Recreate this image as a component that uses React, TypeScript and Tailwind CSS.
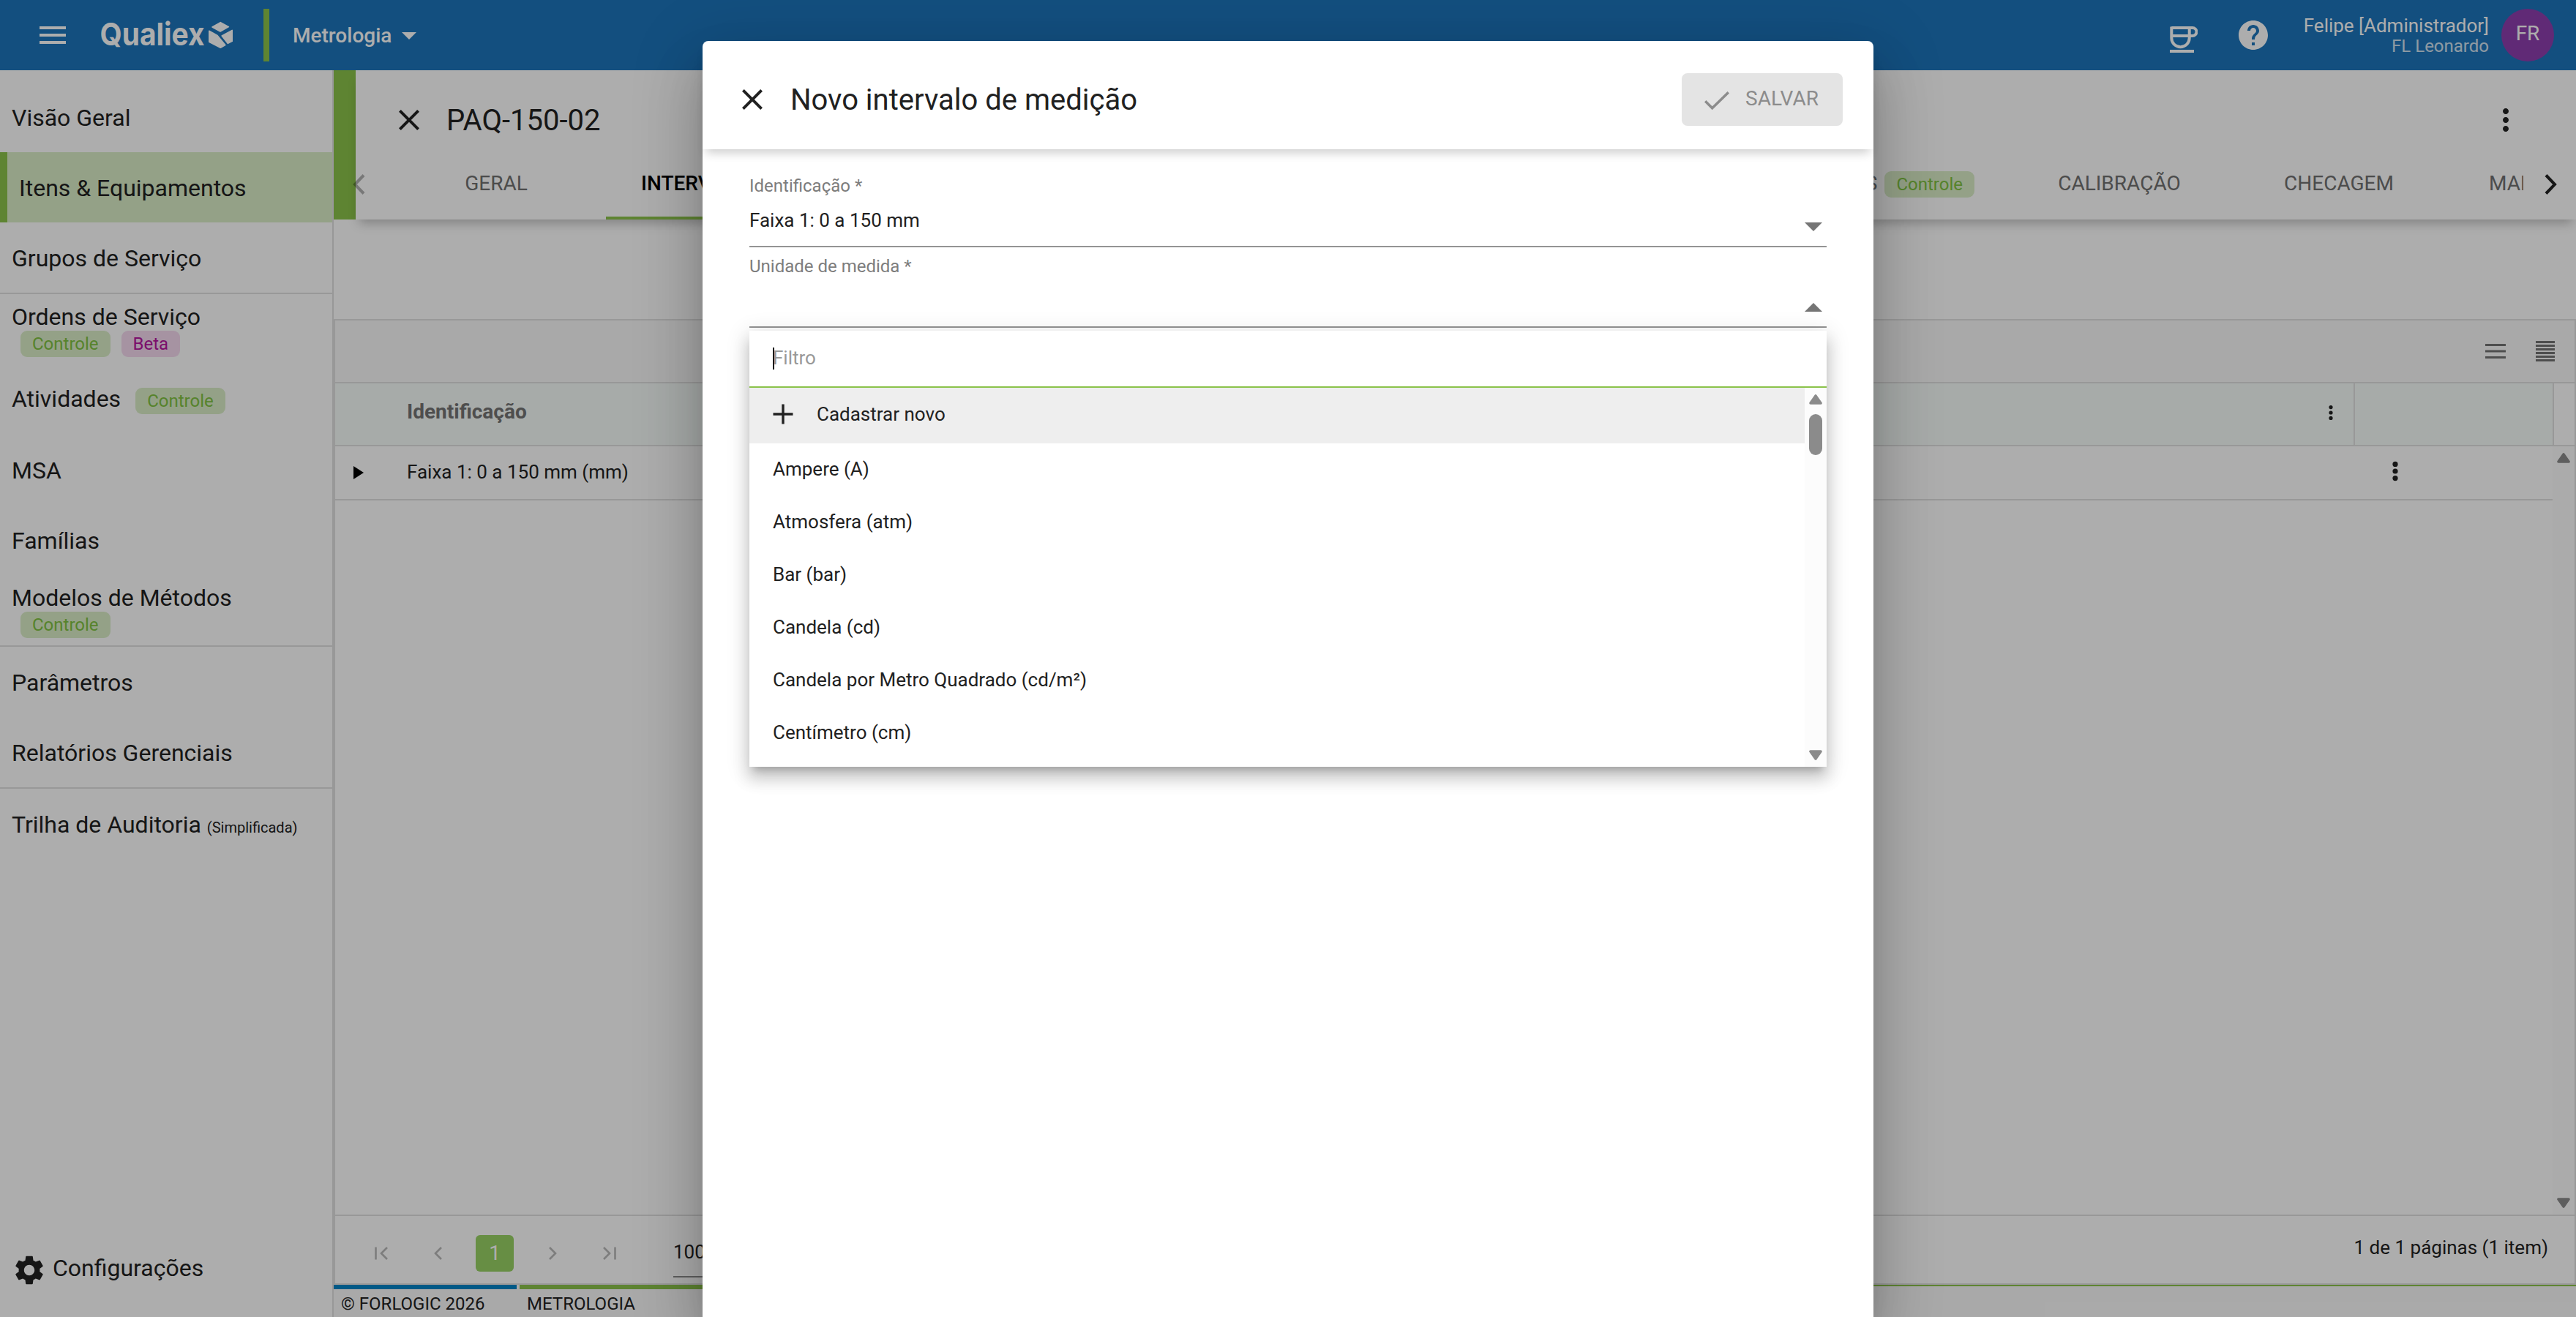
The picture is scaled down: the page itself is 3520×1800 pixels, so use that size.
import type { ReactNode } from "react";
import { MdArrowDropDown, MdClose, MdHelp, MdMenu, MdMoreVert, MdSettings } from "react-icons/md";

const units = [
  "Ampere (A)",
  "Atmosfera (atm)",
  "Bar (bar)",
  "Candela (cd)",
  "Candela por Metro Quadrado (cd/m²)",
  "Centímetro (cm)",
];

function Badge({ children, pink = false }: { children: ReactNode; pink?: boolean }) {
  return (
    <span
      className={
        "flex h-9 items-center rounded-[9px] px-4 text-[24px] leading-none " +
        (pink ? "bg-[#f5d9ef] text-[#b5159f]" : "bg-[#dbedc8] text-[#7fc241]")
      }
    >
      {children}
    </span>
  );
}

function NavItem({ label, children }: { label: string; children?: ReactNode }) {
  return (
    <div className="flex h-24 shrink-0 items-center pl-4 pt-[2px]">
      {label}
      {children}
    </div>
  );
}

function NavStacked({ label, children }: { label: string; children: ReactNode }) {
  return (
    <div className="h-24 shrink-0 pl-4 pt-3">
      <div className="leading-[38px]">{label}</div>
      <div className="ml-3 flex gap-[15px]">{children}</div>
    </div>
  );
}

function Triangle({ up = false, className = "" }: { up?: boolean; className?: string }) {
  return (
    <svg viewBox="0 0 18 14" className={"h-[14px] w-[18px] shrink-0 " + (up ? "" : "rotate-180 ") + className}>
      <path d="M9 2L16 12H2Z" fill="currentColor" stroke="currentColor" strokeWidth="3.6" strokeLinejoin="round" />
    </svg>
  );
}

function Dots({ r, gap, className = "" }: { r: number; gap: number; className?: string }) {
  return (
    <svg viewBox="0 0 10 40" className={"h-10 w-[10px] shrink-0 " + className} fill="#212121">
      <circle cx="5" cy={20 - gap} r={r} />
      <circle cx="5" cy="20" r={r} />
      <circle cx="5" cy={20 + gap} r={r} />
    </svg>
  );
}

function Chevron({ left = false, className = "" }: { left?: boolean; className?: string }) {
  return (
    <svg viewBox="0 0 17 28" className={"h-7 w-[17px] shrink-0 " + className}>
      <path d={left ? "M15 1.5L3 14L15 26.5" : "M2 1.5L14 14L2 26.5"} fill="none" stroke="currentColor" strokeWidth="4" />
    </svg>
  );
}

function PagerIcon({ left = false, bar = false }: { left?: boolean; bar?: boolean }) {
  return (
    <div className="flex h-[50px] w-[78px] items-center justify-center">
      <svg viewBox="0 0 20 18" className={"h-[18px] w-5 " + (left ? "-scale-x-100" : "")} fill="none" stroke="#b8b8b8" strokeWidth="2.6">
        {bar ? <path d="M2 1L10 9L2 17M17.5 0.5V17.5" /> : <path d="M6 1L14 9L6 17" />}
      </svg>
    </div>
  );
}

function Header() {
  return (
    <header className="flex h-24 shrink-0 items-center bg-[#1d75bb] pl-12 pr-[30px] text-white">
      <MdMenu className="size-12" />
      <svg viewBox="0 0 182 40" className="ml-[42px] h-10 w-[182px]" fill="#fff">
        <text x="-1.5" y="34" fontFamily="Inter" fontWeight="700" fontSize="43" textLength="143" lengthAdjust="spacingAndGlyphs">
          Qualiex
        </text>
        <g strokeLinejoin="round" stroke="#fff" strokeWidth="1.6">
          <path d="M163.3 2.6L174.4 8.6L163 15L152 9Z" />
          <path d="M147.8 14.2L159 20.4L169.8 33.6L163.3 37.2L147.8 29.2Z" />
          <path d="M179.2 13.4V28.4L173.4 31.4L165.2 21Z" />
        </g>
      </svg>
      <div className="ml-10 h-[72px] w-2 bg-[#8bc34a]" />
      <div className="ml-8 pt-[2px] text-[28px] font-medium leading-none">Metrologia</div>
      <MdArrowDropDown className="size-12" />
      <div className="grow" />
      <svg viewBox="0 0 38 36" className="mr-[52px] mt-3 h-9 w-[38px]" fill="none" stroke="#fff" strokeWidth="4">
        <path d="M2.3 2H31a5.5 5.5 0 0 1 0 11H2.3M2.3 0.5V16a12.2 12.2 0 0 0 24.4 0V2M0 34H33" />
      </svg>
      <MdHelp className="mr-[45px] size-12" />
      <div className="pt-[2px] text-right">
        <div className="text-[26px] leading-7">Felipe [Administrador]</div>
        <div className="text-[24px] leading-7 text-white/80">FL Leonardo</div>
      </div>
      <div className="ml-[17px] flex size-[72px] items-center justify-center rounded-full bg-[#8e3fae] pb-1 text-[28px]">FR</div>
    </header>
  );
}

function Sidebar() {
  return (
    <aside className="flex w-[456px] shrink-0 flex-col border-r-2 border-[#e1e1e1] bg-white pt-4 text-[32px] leading-none text-[#212121]">
      <NavItem label="Visão Geral" />
      <div className="flex h-24 shrink-0 items-center border-l-[10px] border-[#8bc34a] bg-[#dbedc8] pl-4 pt-[2px]">
        Itens &amp; Equipamentos
      </div>
      <NavItem label="Grupos de Serviço" />
      <div className="h-[2px] shrink-0 bg-[#e1e1e1]" />
      <NavStacked label="Ordens de Serviço">
        <Badge>Controle</Badge>
        <Badge pink>Beta</Badge>
      </NavStacked>
      <div className="flex h-24 shrink-0 items-center pl-4">
        <span className="pb-[2px]">Atividades</span>
        <div className="ml-5 mt-1">
          <Badge>Controle</Badge>
        </div>
      </div>
      <NavItem label="MSA" />
      <NavItem label="Famílias" />
      <NavStacked label="Modelos de Métodos">
        <Badge>Controle</Badge>
      </NavStacked>
      <div className="h-[2px] shrink-0 bg-[#e1e1e1]" />
      <NavItem label="Parâmetros" />
      <NavItem label="Relatórios Gerenciais" />
      <div className="h-[2px] shrink-0 bg-[#e1e1e1]" />
      <div className="flex h-24 shrink-0 items-center pl-4 pt-[2px]">
        <div className="flex items-baseline gap-2">
          Trilha de Auditoria <span className="text-[20px]">(Simplificada)</span>
        </div>
      </div>
      <div className="mb-10 mt-auto flex h-12 items-center pl-4">
        <MdSettings className="size-12" />
        <span className="ml-2 pb-[6px]">Configurações</span>
      </div>
    </aside>
  );
}

function ItemHeader() {
  return (
    <div className="flex h-[204px] shrink-0">
      <div className="w-[30px] bg-[#8bc34a]" />
      <div className="grow bg-white shadow-[0_10px_14px_-5px_rgba(0,0,0,0.25)]">
        <div className="flex h-[108px] items-start pl-[49px] pr-[72px] pt-11 text-[#212121]">
          <MdClose className="size-12" />
          <div className="ml-[27px] text-[40px] leading-[50px]">PAQ-150-02</div>
          <MdMoreVert className="ml-auto size-12" />
        </div>
        <div className="flex h-24 items-center">
          <Chevron left className="relative -ml-1 text-black/30" />
          <div className="ml-[29px] flex h-24 w-[2920px] overflow-hidden whitespace-nowrap text-[28px] leading-[93px] text-[#707070]">
            <div className="w-[300px] shrink-0 text-center">GERAL</div>
            <div className="w-[416px] shrink-0 border-b-4 border-[#8bc34a] pl-12 font-medium text-black">INTERVALOS DE MEDIÇÃO</div>
            <div className="ml-[902px] flex w-[600px] shrink-0 items-start justify-end pr-12">
              SERVIÇOS
              <div className="ml-[10px] mt-[30px] leading-none">
                <Badge>Controle</Badge>
              </div>
            </div>
            <div className="w-[300px] shrink-0 text-center">CALIBRAÇÃO</div>
            <div className="w-[300px] shrink-0 text-center">CHECAGEM</div>
            <div className="shrink-0 pl-[55px]">MANUTENÇÃO</div>
          </div>
          <Chevron className="ml-[29px] text-[#212121]" />
        </div>
      </div>
    </div>
  );
}

function RangeTable() {
  return (
    <div className="mt-[136px] flex grow flex-col border-2 border-[#e1e1e1] bg-white text-[26px] leading-none text-[#212121]">
      <div className="flex h-[86px] shrink-0 items-center justify-end border-b-2 border-[#e1e1e1] bg-[#fafafa] pr-[27px]">
        <svg viewBox="0 0 28 24" className="mr-[41px] h-6 w-7" stroke="#747474" strokeWidth="3">
          <path d="M0 3.5H28M0 12H28M0 20.5H28" />
        </svg>
        <svg viewBox="0 0 26 28" className="h-7 w-[26px]" stroke="#747474" strokeWidth="2.8">
          <path d="M0 1.5H26M0 6.5H26M0 11.5H26M0 16.5H26M0 21.5H26M0 26.5H26" />
        </svg>
      </div>
      <div className="flex h-[86px] shrink-0 border-b-2 border-[#e1e1e1]">
        <div className="flex w-[2760px] shrink-0 items-center justify-between border-r-2 border-[#e1e1e1] bg-[#f7fcfa] pl-[98px] pr-[26px]">
          <span className="pb-[7px] text-[28px] font-bold text-[#747474]">Identificação</span>
          <Dots r={2.6} gap={7.4} className="-mt-1" />
        </div>
        <div className="w-[272px] shrink-0 border-r-2 border-[#e1e1e1] bg-[#f7fcfa]" />
      </div>
      <div className="flex grow">
        <div className="grow">
          <div className="flex h-[74px] items-center border-b-2 border-[#e1e1e1]">
            <svg viewBox="0 0 14 18" className="ml-[25px] h-[18px] w-[14px]">
              <path d="M0 0L14 9L0 18Z" fill="#000" />
            </svg>
            <span className="ml-[59px] pb-[2px]">Faixa 1: 0 a 150 mm (mm)</span>
            <Dots r={3.6} gap={9.6} className="-mt-[5px] ml-auto mr-[210px]" />
          </div>
        </div>
        <div className="flex w-[30px] flex-col items-center justify-between bg-[#fcfcfc] pb-[9px] pt-[9px] text-[#8b8b8b]">
          <Triangle up />
          <Triangle />
        </div>
      </div>
      <div className="flex h-[94px] shrink-0 items-start border-t-2 border-[#e1e1e1] pl-6 pt-[26px]">
        <PagerIcon left bar />
        <PagerIcon left />
        <div className="ml-3 mr-[14px] flex h-[50px] w-[52px] items-center justify-center rounded-md bg-[#99d165] text-[28px] text-white">
          1
        </div>
        <PagerIcon />
        <PagerIcon bar />
        <div className="ml-12 h-[58px] w-[140px] border-b-2 border-[#8d8d8d] leading-[46px]">100</div>
        <div className="ml-auto pr-9 leading-[34px]">1 de 1 páginas (1 item)</div>
      </div>
    </div>
  );
}

function Footer() {
  return (
    <footer className="flex h-11 shrink-0 gap-1 bg-[#fafafa] text-[24px] leading-[40px] text-[#212121]">
      <div className="w-[250px] border-t-[6px] border-[#0084c6] pl-[10px]">© FORLOGIC 2026</div>
      <div className="w-[280px] border-t-[6px] border-[#8bc34a] pl-[10px]">METROLOGIA</div>
      <div className="-ml-1 grow border-t-2 border-[#8bc34a]" />
    </footer>
  );
}

function UnitPanel() {
  return (
    <div className="absolute left-16 top-[396px] flex h-[596px] w-[1472px] flex-col bg-white shadow-[0_10px_10px_-6px_rgba(0,0,0,0.2),0_16px_20px_2px_rgba(0,0,0,0.14),0_6px_28px_4px_rgba(0,0,0,0.12)]">
      <div className="flex h-[78px] shrink-0 items-center border-b-2 border-[#8bc34a] pl-8">
        <span className="-mr-[2px] h-[30px] w-[2px] bg-black" />
        <span className="pb-[2px] text-[#999]">Filtro</span>
      </div>
      <div className="flex min-h-0 grow">
        <div className="grow">
          <div className="flex h-[76px] items-center bg-[#eee] pb-1 pl-8">
            <svg viewBox="0 0 28 28" className="size-7" stroke="#212121" strokeWidth="3.4">
              <path d="M0.5 14H27.5M14 0.5V27.5" />
            </svg>
            <span className="ml-8">Cadastrar novo</span>
          </div>
          <div className="-mt-px">
            {units.map((u) => (
              <div key={u} className="flex h-[72px] items-center pl-8">
                {u}
              </div>
            ))}
          </div>
        </div>
        <div className="flex w-[30px] flex-col items-center bg-[#fcfcfc] pb-[9px] pt-[9px] text-[#8b8b8b]">
          <Triangle up />
          <div className="mt-[13px] h-14 w-[18px] rounded-full bg-[#8b8b8b]" />
          <Triangle className="mt-auto" />
        </div>
      </div>
    </div>
  );
}

function Dialog() {
  return (
    <div className="absolute left-[960px] top-14 h-[1744px] w-[1600px] rounded-t-lg bg-white text-[26px] leading-none text-[#212121] shadow-[0_22px_30px_-14px_rgba(0,0,0,0.2),0_48px_76px_6px_rgba(0,0,0,0.14),0_18px_92px_16px_rgba(0,0,0,0.12)]">
      <div className="flex h-[148px] items-start rounded-t-lg pl-11 pr-[42px] pt-11 shadow-[0_10px_14px_-5px_rgba(0,0,0,0.2)]">
        <MdClose className="mt-3 size-12" />
        <div className="ml-7 mt-3 text-[40px] leading-[50px]">Novo intervalo de medição</div>
        <div className="ml-auto flex h-[72px] w-[220px] items-center rounded-lg bg-[#e4e4e4] pl-[31px] text-[28px] text-[#8c8c8c]">
          <svg viewBox="0 0 34 26" className="mt-[3px] h-[26px] w-[34px]" fill="none" stroke="currentColor" strokeWidth="3.5">
            <path d="M1.2 13.2L10.7 22.7L32.8 1.2" />
          </svg>
          <span className="ml-[22px] pb-[3px]">SALVAR</span>
        </div>
      </div>
      <div className="px-16 pt-[30px]">
        <div className="text-[24px] leading-10 text-[#7d7d7d]">Identificação *</div>
        <div className="flex h-16 items-start justify-between border-b-2 border-[#949494] pr-[6px] leading-[55px]">
          Faixa 1: 0 a 150 mm
          <svg viewBox="0 0 24 12" className="mt-[30px] h-3 w-6">
            <path d="M0 0H24L12 12Z" fill="#757575" />
          </svg>
        </div>
        <div className="mt-[6px] text-[24px] leading-10 text-[#7d7d7d]">Unidade de medida *</div>
        <div className="flex h-16 items-start justify-end border-b-2 border-[#949494] pr-[6px]">
          <svg viewBox="0 0 24 12" className="mt-[30px] h-3 w-6">
            <path d="M0 12H24L12 0Z" fill="#757575" />
          </svg>
        </div>
      </div>
      <UnitPanel />
    </div>
  );
}

export default function App() {
  return (
    <div className="relative flex h-[1800px] w-[3520px] flex-col overflow-hidden bg-white font-['Roboto',sans-serif]">
      <Header />
      <div className="flex min-h-0 grow">
        <Sidebar />
        <main className="flex w-[3064px] flex-col bg-white">
          <ItemHeader />
          <RangeTable />
          <Footer />
        </main>
      </div>
      <div className="absolute inset-0 bg-black/32" />
      <Dialog />
    </div>
  );
}
